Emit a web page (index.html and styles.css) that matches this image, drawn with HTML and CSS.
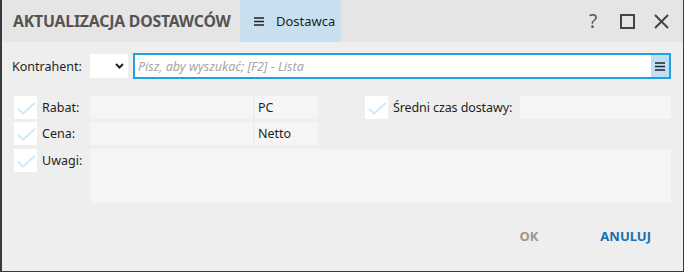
FILE: index.html
```html
<!DOCTYPE html>
<html lang="pl">
<head>
  <meta charset="UTF-8" />
  <title>Aktualizacja dostawców</title>
  <link rel="stylesheet" href="styles.css">
</head>
<body>
  <div class="window">
    <div class="titlebar">
      <h1 class="title">AKTUALIZACJA DOSTAWCÓW</h1>
      <div class="tab">
        <span class="tab-icon">
          <svg width="10" height="9" viewBox="0 0 10 9"><path d="M0 1h10M0 4.5h10M0 8h10" stroke="#222" stroke-width="1.4"/></svg>
        </span>
        Dostawca
      </div>
      <div class="spacer"></div>
      <div class="win-btn help">?</div>
      <div class="win-btn">
        <svg width="15" height="15" viewBox="0 0 15 15"><rect x="1" y="1" width="13" height="13" fill="none" stroke="#444" stroke-width="2"/></svg>
      </div>
      <div class="win-btn">
        <svg width="15" height="15" viewBox="0 0 15 15"><path d="M1 1L14 14M14 1L1 14" stroke="#444" stroke-width="2"/></svg>
      </div>
    </div>

    <div class="content">
      <div class="row contractor">
        <label class="lbl">Kontrahent:</label>
        <div class="select">
          <svg width="9" height="6" viewBox="0 0 9 6"><path d="M1 1l3.5 3.5L8 1" fill="none" stroke="#222" stroke-width="2"/></svg>
        </div>
        <div class="search">
          <span class="placeholder">Pisz, aby wyszukać; [F2] - Lista</span>
          <span class="search-btn">
            <svg width="10" height="9" viewBox="0 0 10 9"><path d="M0 1h10M0 4.5h10M0 8h10" stroke="#222" stroke-width="1.6"/></svg>
          </span>
        </div>
      </div>

      <div class="fields">
        <div class="col-left">
          <div class="frow">
            <span class="check"><svg width="20" height="14" viewBox="0 0 20 14"><path d="M2 8l5 5L19 2" fill="none" stroke="#bfe4f6" stroke-width="1.2"/><path d="M2.6 7.2l4.4 4.4L18.4 1.2" fill="none" stroke="#d9f0fb" stroke-width="1"/></svg></span>
            <span class="flbl">Rabat:</span>
            <span class="box wide"></span>
            <span class="box unit">PC</span>
          </div>
          <div class="frow">
            <span class="check"><svg width="20" height="14" viewBox="0 0 20 14"><path d="M2 8l5 5L19 2" fill="none" stroke="#bfe4f6" stroke-width="1.2"/><path d="M2.6 7.2l4.4 4.4L18.4 1.2" fill="none" stroke="#d9f0fb" stroke-width="1"/></svg></span>
            <span class="flbl">Cena:</span>
            <span class="box wide"></span>
            <span class="box unit">Netto</span>
          </div>
        </div>
        <div class="col-right">
          <div class="frow">
            <span class="check"><svg width="20" height="14" viewBox="0 0 20 14"><path d="M2 8l5 5L19 2" fill="none" stroke="#bfe4f6" stroke-width="1.2"/><path d="M2.6 7.2l4.4 4.4L18.4 1.2" fill="none" stroke="#d9f0fb" stroke-width="1"/></svg></span>
            <span class="flbl">Średni czas dostawy:</span>
            <span class="box time"></span>
          </div>
        </div>
      </div>

      <div class="frow notes">
        <span class="check"><svg width="20" height="14" viewBox="0 0 20 14"><path d="M2 8l5 5L19 2" fill="none" stroke="#bfe4f6" stroke-width="1.2"/><path d="M2.6 7.2l4.4 4.4L18.4 1.2" fill="none" stroke="#d9f0fb" stroke-width="1"/></svg></span>
        <span class="flbl">Uwagi:</span>
        <span class="box memo"></span>
      </div>

      <div class="actions">
        <button class="btn disabled">OK</button>
        <button class="btn primary">ANULUJ</button>
      </div>
    </div>
  </div>
</body>
</html>
```

FILE: styles.css
```css
* {
  box-sizing: border-box;
}

body {
  margin: 0;
  font-family: "Noto Sans", "Open Sans", sans-serif;
  font-size: 12.5px;
  color: #1e1e1e;
  background: #fff;
}

.window {
  width: 684px;
  height: 272px;
  background-color: #eeeeee;
  border-left: 2px solid #3a3a3a;
  border-right: 1px solid #3a3a3a;
  border-bottom: 1px solid #3a3a3a;
  display: flex;
  flex-direction: column;
}

.titlebar {
  height: 42px;
  background-color: #e5e5e5;
  display: flex;
  align-items: stretch;
  flex-shrink: 0;
}

.title {
  margin: 0;
  width: 238px;
  padding-left: 11px;
  font-size: 15.8px;
  font-weight: bold;
  color: #545454;
  display: flex;
  align-items: center;
  letter-spacing: -0.2px;
  white-space: nowrap;
}

.tab {
  width: 101px;
  background-color: #c8dff0;
  display: flex;
  align-items: center;
  padding-left: 14px;
  font-size: 13px;
  color: #1e1e1e;
}

.tab-icon {
  display: flex;
  margin-right: 12px;
}

.spacer {
  flex: 1;
}

.win-btn {
  width: 34px;
  display: flex;
  align-items: center;
  justify-content: center;
  color: #444;
}

.win-btn:last-child {
  margin-right: 5px;
}

.help {
  font-size: 19px;
  color: #555;
}

.content {
  flex: 1;
  padding: 11px 12px 0 10px;
  display: flex;
  flex-direction: column;
}

.row {
  display: flex;
  align-items: center;
}

.lbl {
  width: 78px;
}

.select {
  width: 38px;
  height: 24px;
  background: #fff;
  display: flex;
  align-items: center;
  justify-content: flex-end;
  padding-right: 4px;
}

.search {
  flex: 1;
  height: 26px;
  margin-left: 5px;
  border: 2px solid #21a2e0;
  background: #fff;
  display: flex;
  align-items: center;
}

.placeholder {
  flex: 1;
  padding-left: 3px;
  font-style: italic;
  color: #a6a6a6;
}

.search-btn {
  width: 18px;
  height: 100%;
  background: #bde0f5;
  display: flex;
  align-items: center;
  justify-content: center;
}

.fields {
  display: flex;
  margin-top: 17px;
}

.col-left {
  width: 341px;
  display: flex;
  flex-direction: column;
  gap: 3px;
}

.col-right {
  flex: 1;
}

.frow {
  display: flex;
  align-items: flex-start;
}

.check {
  width: 23px;
  height: 23px;
  margin-left: 2px;
  background: #fff;
  display: flex;
  align-items: center;
  justify-content: center;
  flex-shrink: 0;
}

.flbl {
  padding: 3px 0 0 5px;
  width: 53px;
  flex-shrink: 0;
}

.col-right .flbl {
  width: 132px;
  letter-spacing: -0.1px;
}

.box {
  background: #f5f5f5;
  height: 23px;
  padding: 3px 0 0 3px;
}

.wide {
  width: 163px;
}

.unit {
  width: 63px;
  margin-left: 2px;
}

.time {
  flex: 1;
}

.col-right .frow {
  padding-left: 10px;
}

.notes {
  margin-top: 4px;
}

.memo {
  flex: 1;
  height: 54px;
}

.actions {
  display: flex;
  justify-content: flex-end;
  margin-top: 24px;
  padding-right: 20px;
}

.btn {
  border: none;
  background: transparent;
  font-family: inherit;
  font-size: 13px;
  font-weight: bold;
  padding: 0;
  cursor: pointer;
}

.disabled {
  color: #a3968a;
  margin-right: 62px;
}

.primary {
  color: #1a6fb3;
}
```
